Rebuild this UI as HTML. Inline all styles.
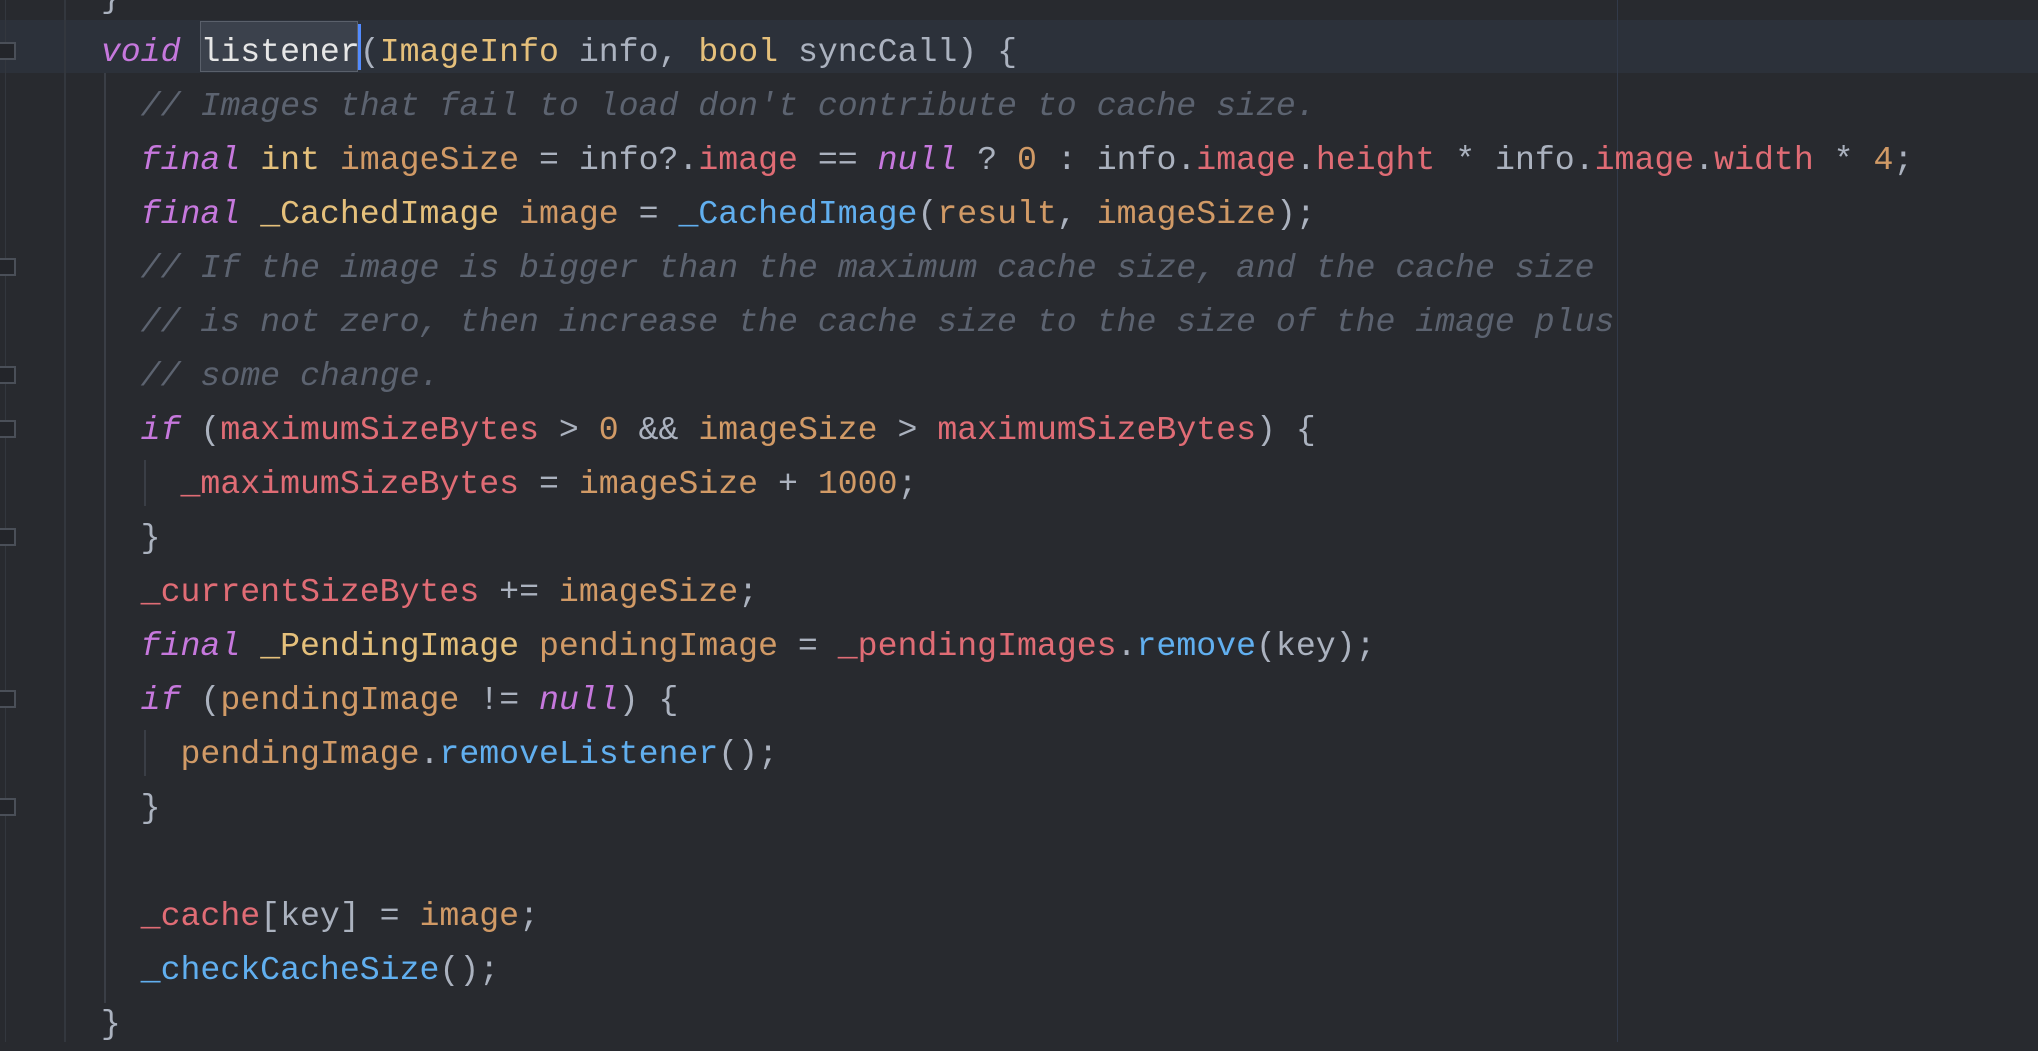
<!DOCTYPE html>
<html><head><meta charset="utf-8"><style>
html,body{margin:0;padding:0}
body{width:2038px;height:1042px;background:#282a2f;position:relative;overflow:hidden;font-family:"Liberation Mono",monospace;font-size:33.2px;color:#abb2bf}
.l{position:absolute;left:61px;height:54px;line-height:54px;white-space:pre}
.k{color:#c678dd;font-style:italic}
.c{color:#5c6370;font-style:italic}
.y{color:#e5c07b}
.o{color:#d19a66}
.r{color:#e06c75}
.b{color:#61afef}
.w{color:#e6e6e6}
.v{position:absolute;width:2px;background:#3a3e46}
.f{position:absolute;left:0;width:16px;height:18px;border:2px solid #4a4f58;border-left:none;box-sizing:border-box;background:#23252a}
</style></head><body>
<div style="position:absolute;left:0;top:20px;width:2038px;height:53px;background:#2c313a"></div>
<div style="position:absolute;left:200px;top:21px;width:158px;height:51px;background:#3b414c;border:1px solid #5a606b;box-sizing:border-box"></div>
<div style="position:absolute;left:358px;top:24px;width:3px;height:46px;background:#528bff"></div>
<div class="v" style="left:5px;top:0;height:1042px;width:1px;background:#33373e"></div>
<div class="v" style="left:64px;top:0;height:1042px;background:#33373e"></div>
<div class="v" style="left:104px;top:73px;height:930px;background:#3a3e46"></div>
<div class="v" style="left:144px;top:460px;height:46px"></div>
<div class="v" style="left:144px;top:730px;height:46px"></div>
<div class="v" style="left:1617px;top:0;height:1042px;width:1px;background:#323a4a"></div>
<div class="f" style="top:42px"></div>
<div class="f" style="top:258px"></div>
<div class="f" style="top:366px"></div>
<div class="f" style="top:420px"></div>
<div class="f" style="top:528px"></div>
<div class="f" style="top:690px"></div>
<div class="f" style="top:798px"></div>
<div class="l" style="top:-29px">  }</div>
<div class="l" style="top:25px">  <span class="k">void</span> <span class="w">listener</span>(<span class="y">ImageInfo</span> info, <span class="y">bool</span> syncCall) {</div>
<div class="l c" style="top:79px">    // Images that fail to load don't contribute to cache size.</div>
<div class="l" style="top:133px">    <span class="k">final</span> <span class="y">int</span> <span class="o">imageSize</span> = info?.<span class="r">image</span> == <span class="k">null</span> ? <span class="o">0</span> : info.<span class="r">image</span>.<span class="r">height</span> * info.<span class="r">image</span>.<span class="r">width</span> * <span class="o">4</span>;</div>
<div class="l" style="top:187px">    <span class="k">final</span> <span class="y">_CachedImage</span> <span class="o">image</span> = <span class="b">_CachedImage</span>(<span class="o">result</span>, <span class="o">imageSize</span>);</div>
<div class="l c" style="top:241px">    // If the image is bigger than the maximum cache size, and the cache size</div>
<div class="l c" style="top:295px">    // is not zero, then increase the cache size to the size of the image plus</div>
<div class="l c" style="top:349px">    // some change.</div>
<div class="l" style="top:403px">    <span class="k">if</span> (<span class="r">maximumSizeBytes</span> &gt; <span class="o">0</span> &amp;&amp; <span class="o">imageSize</span> &gt; <span class="r">maximumSizeBytes</span>) {</div>
<div class="l" style="top:457px">      <span class="r">_maximumSizeBytes</span> = <span class="o">imageSize</span> + <span class="o">1000</span>;</div>
<div class="l" style="top:511px">    }</div>
<div class="l" style="top:565px">    <span class="r">_currentSizeBytes</span> += <span class="o">imageSize</span>;</div>
<div class="l" style="top:619px">    <span class="k">final</span> <span class="y">_PendingImage</span> <span class="o">pendingImage</span> = <span class="r">_pendingImages</span>.<span class="b">remove</span>(key);</div>
<div class="l" style="top:673px">    <span class="k">if</span> (<span class="o">pendingImage</span> != <span class="k">null</span>) {</div>
<div class="l" style="top:727px">      <span class="o">pendingImage</span>.<span class="b">removeListener</span>();</div>
<div class="l" style="top:781px">    }</div>
<div class="l" style="top:889px">    <span class="r">_cache</span>[key] = <span class="o">image</span>;</div>
<div class="l" style="top:943px">    <span class="b">_checkCacheSize</span>();</div>
<div class="l" style="top:997px">  }</div>
</body></html>
